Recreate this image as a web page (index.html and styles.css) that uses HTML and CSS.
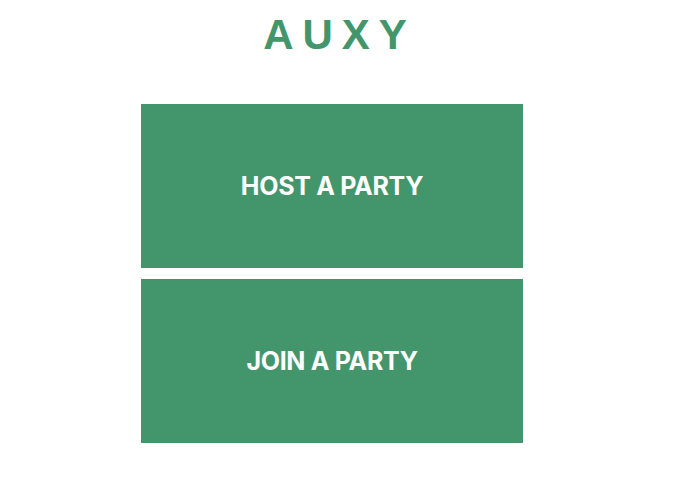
FILE: index.html
```html
<!DOCTYPE html>
<html>
<head>
<meta charset="utf-8">
<link rel="stylesheet" href="styles.css">
</head>
<body>
<div class="page">
  <h1 class="logo">AUXY</h1>
  <div class="actions">
    <button class="action">HOST A PARTY</button>
    <button class="action">JOIN A PARTY</button>
  </div>
</div>
</body>
</html>
```
FILE: styles.css
```css
html, body {
  margin: 0;
  padding: 0;
  background: #ffffff;
}
.page {
  width: 382px;
  margin-left: 141px;
  padding-top: 14px;
  display: flex;
  flex-direction: column;
}
.logo {
  margin: 0;
  font-family: "Liberation Sans", Arial, sans-serif;
  font-weight: 700;
  font-size: 42px;
  line-height: 42px;
  letter-spacing: 9px;
  padding-left: 15px;
  text-align: center;
  color: #43966b;
}
.actions {
  margin-top: 48px;
  display: flex;
  flex-direction: column;
  gap: 11px;
}
.action {
  height: 164px;
  border: none;
  margin: 0;
  padding: 0;
  background: #43966b;
  color: #ffffff;
  font-family: Inter, "Liberation Sans", sans-serif;
  font-weight: 700;
  font-size: 25px;
  letter-spacing: -0.3px;
  text-align: center;
}
```
